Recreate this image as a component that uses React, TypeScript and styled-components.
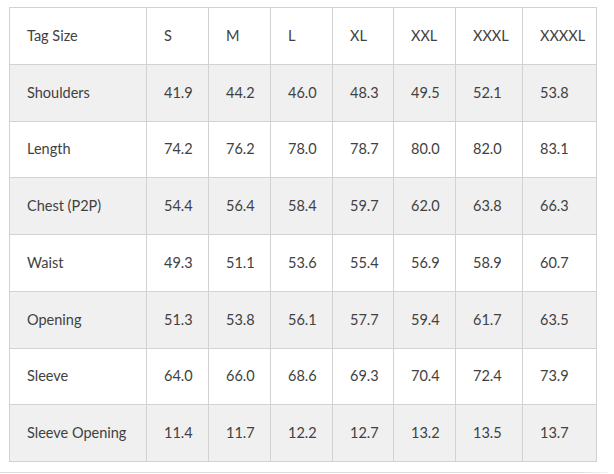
import React from "react";
import styled, { createGlobalStyle } from "styled-components";

const Global = createGlobalStyle`
  html, body { margin: 0; padding: 0; background: #fff; }
  body { font-family: Lato, "Noto Sans", sans-serif; }
`;

const Page = styled.div`
  width: 614px;
  height: 474px;
  display: flex;
  flex-direction: column;
  overflow: hidden;
`;

const Wrap = styled.div`
  padding: 7px 0 0 9px;
  height: 465px;
  box-sizing: border-box;
`;

const Table = styled.table`
  border-collapse: collapse;
  table-layout: fixed;
  width: 588px;
  font-size: 14.5px;
  color: #414141;
`;

const Row = styled.tr<{ $striped?: boolean }>`
  height: 56.75px;
  background: ${(p) => (p.$striped ? "#f0f0f0" : "#ffffff")};
`;

const Cell = styled.td`
  border: 1px solid #d2d2d2;
  padding: 0 0 0 17px;
  vertical-align: middle;
  white-space: nowrap;
  line-height: 20px;
`;

const Rule = styled.div`
  width: 609px;
  height: 1px;
  margin-top: 7px;
  background: linear-gradient(to right, #dcdcdc 0%, #dcdcdc 95%, #f4f4f4 100%);
`;

const widths = [137, 62, 62, 62, 61, 62, 67, 74];

const header = ["Tag Size", "S", "M", "L", "XL", "XXL", "XXXL", "XXXXL"];
const rows: string[][] = [
  ["Shoulders", "41.9", "44.2", "46.0", "48.3", "49.5", "52.1", "53.8"],
  ["Length", "74.2", "76.2", "78.0", "78.7", "80.0", "82.0", "83.1"],
  ["Chest (P2P)", "54.4", "56.4", "58.4", "59.7", "62.0", "63.8", "66.3"],
  ["Waist", "49.3", "51.1", "53.6", "55.4", "56.9", "58.9", "60.7"],
  ["Opening", "51.3", "53.8", "56.1", "57.7", "59.4", "61.7", "63.5"],
  ["Sleeve", "64.0", "66.0", "68.6", "69.3", "70.4", "72.4", "73.9"],
  ["Sleeve Opening", "11.4", "11.7", "12.2", "12.7", "13.2", "13.5", "13.7"],
];

export default function App() {
  return (
    <Page>
      <Global />
      <Wrap>
        <Table>
          <colgroup>
            {widths.map((w, i) => (
              <col key={i} style={{ width: w }} />
            ))}
          </colgroup>
          <tbody>
            <Row>
              {header.map((h) => (
                <Cell key={h}>{h}</Cell>
              ))}
            </Row>
            {rows.map((r, i) => (
              <Row key={r[0]} $striped={i % 2 === 0}>
                {r.map((c, j) => (
                  <Cell key={j}>{c}</Cell>
                ))}
              </Row>
            ))}
          </tbody>
        </Table>
      </Wrap>
      <Rule />
    </Page>
  );
}
